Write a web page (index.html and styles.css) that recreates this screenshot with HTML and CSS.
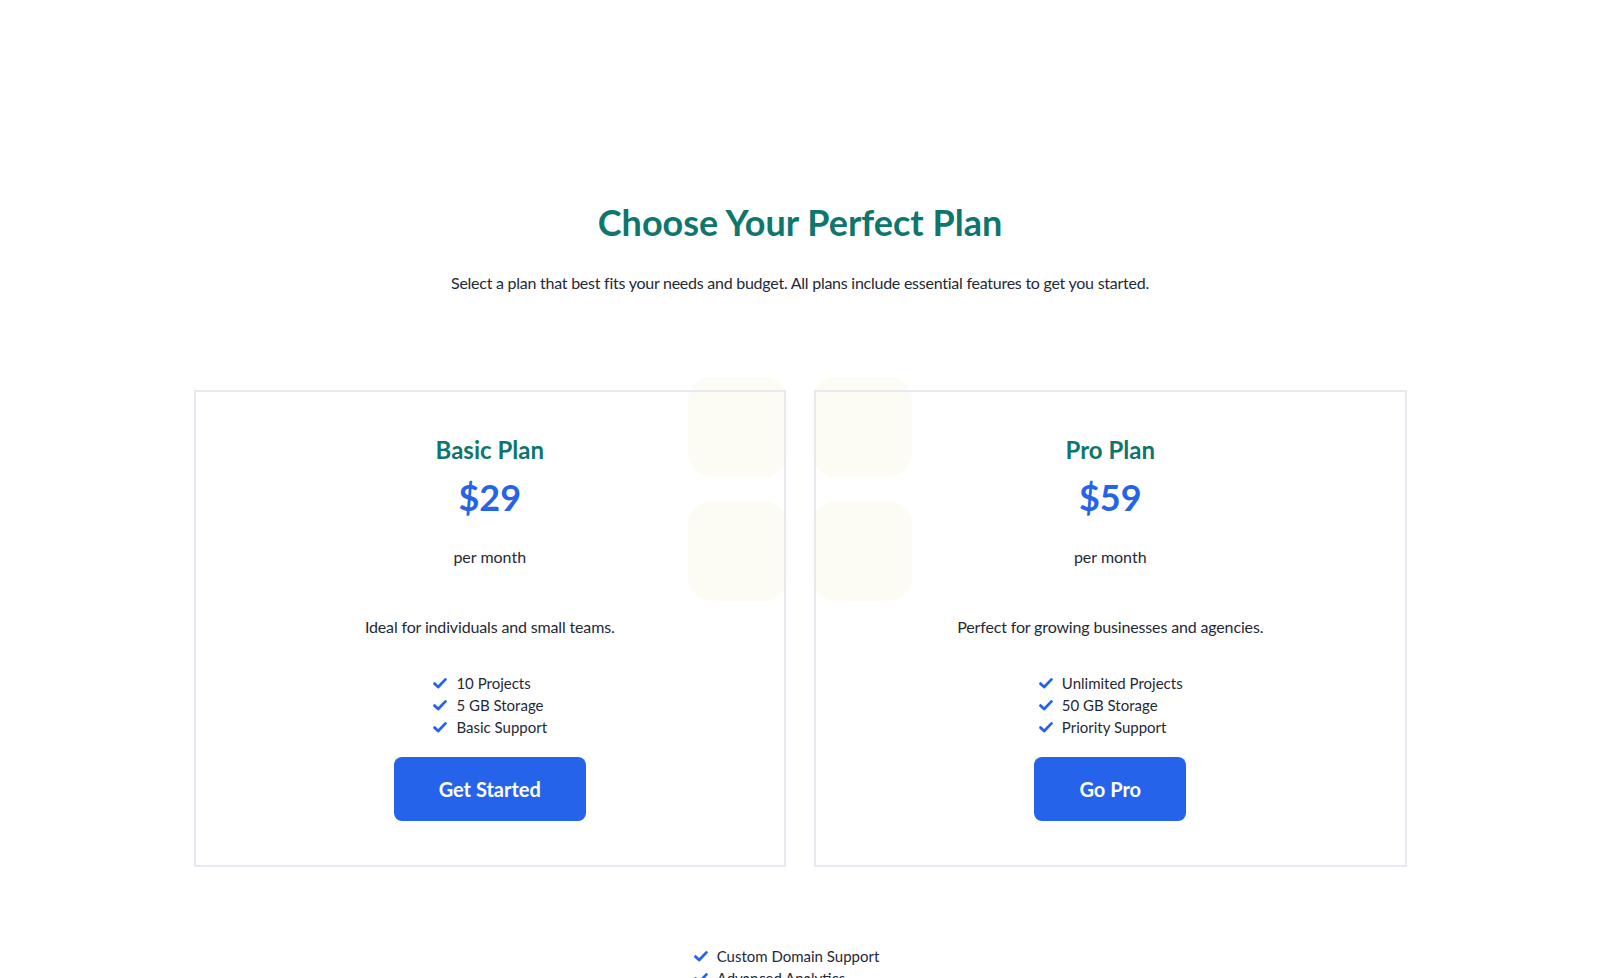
FILE: index.html
```html
<!DOCTYPE html>
<html lang="en">
<head>
<meta charset="utf-8">
<title>Choose Your Perfect Plan</title>
<link rel="stylesheet" href="styles.css">
</head>
<body>
<main class="pricing">
  <h1 class="pricing-title">Choose Your Perfect Plan</h1>
  <p class="pricing-subtitle">Select a plan that best fits your needs and budget. All plans include essential features to get you started.</p>

  <div class="plans">
    <div class="decor" aria-hidden="true">
      <span class="decor-tile"></span>
      <span class="decor-tile"></span>
      <span class="decor-tile"></span>
      <span class="decor-tile"></span>
    </div>

    <section class="plan">
      <h2 class="plan-name">Basic Plan</h2>
      <div class="plan-price">$29</div>
      <p class="plan-period">per month</p>
      <p class="plan-desc">Ideal for individuals and small teams.</p>
      <ul class="features">
        <li class="feature"><svg class="check" viewBox="0 0 16 16"><path d="M2.5 8.6 L6.2 12 L13.5 4.4"/></svg>10 Projects</li>
        <li class="feature"><svg class="check" viewBox="0 0 16 16"><path d="M2.5 8.6 L6.2 12 L13.5 4.4"/></svg>5 GB Storage</li>
        <li class="feature"><svg class="check" viewBox="0 0 16 16"><path d="M2.5 8.6 L6.2 12 L13.5 4.4"/></svg>Basic Support</li>
      </ul>
      <button class="plan-btn">Get Started</button>
    </section>

    <section class="plan">
      <h2 class="plan-name">Pro Plan</h2>
      <div class="plan-price">$59</div>
      <p class="plan-period">per month</p>
      <p class="plan-desc">Perfect for growing businesses and agencies.</p>
      <ul class="features">
        <li class="feature"><svg class="check" viewBox="0 0 16 16"><path d="M2.5 8.6 L6.2 12 L13.5 4.4"/></svg>Unlimited Projects</li>
        <li class="feature"><svg class="check" viewBox="0 0 16 16"><path d="M2.5 8.6 L6.2 12 L13.5 4.4"/></svg>50 GB Storage</li>
        <li class="feature"><svg class="check" viewBox="0 0 16 16"><path d="M2.5 8.6 L6.2 12 L13.5 4.4"/></svg>Priority Support</li>
      </ul>
      <button class="plan-btn">Go Pro</button>
    </section>
  </div>

  <ul class="features extra-features">
    <li class="feature"><svg class="check" viewBox="0 0 16 16"><path d="M2.5 8.6 L6.2 12 L13.5 4.4"/></svg>Custom Domain Support</li>
    <li class="feature"><svg class="check" viewBox="0 0 16 16"><path d="M2.5 8.6 L6.2 12 L13.5 4.4"/></svg>Advanced Analytics</li>
  </ul>
</main>
</body>
</html>
```

FILE: styles.css
```css
* { box-sizing: border-box; }

html, body {
  margin: 0;
  padding: 0;
  background: #ffffff;
}

body {
  font-family: "Lato", "Noto Sans", sans-serif;
  color: #1f2937;
}

.pricing {
  display: flex;
  flex-direction: column;
  align-items: center;
  padding-top: 200px;
  text-align: center;
}

.pricing-title {
  margin: 0;
  font-size: 36px;
  line-height: 44px;
  font-weight: 700;
  color: #0f766e;
}

.pricing-subtitle {
  margin: 27px 0 0;
  font-size: 16px;
  line-height: 24px;
  letter-spacing: -0.25px;
}

.plans {
  position: relative;
  margin-top: 95px;
  width: 1213px;
  display: grid;
  grid-template-columns: 1fr 1fr;
  gap: 28px;
}

.decor {
  position: absolute;
  top: -13px;
  left: 50%;
  transform: translateX(-50%);
  display: grid;
  grid-template-columns: 100px 100px;
  grid-auto-rows: 100px;
  gap: 24px;
  z-index: 0;
  pointer-events: none;
}

.decor-tile {
  background: #fcfbf4;
  border-radius: 24px;
}

.plan {
  position: relative;
  z-index: 1;
  border: 2px solid #e6eaf0;
  padding: 42px 40px 44px;
  display: flex;
  flex-direction: column;
  align-items: center;
}

.plan-name {
  margin: 0;
  font-size: 24px;
  line-height: 32px;
  font-weight: 700;
  color: #0f766e;
}

.plan-price {
  margin-top: 9px;
  font-size: 36px;
  line-height: 44px;
  font-weight: 700;
  color: #2563eb;
}

.plan-period {
  margin: 26px 0 0;
  font-size: 16px;
  line-height: 24px;
}

.plan-desc {
  margin: 46px 0 0;
  font-size: 16px;
  line-height: 24px;
  letter-spacing: -0.15px;
}

.features {
  list-style: none;
  margin: 33px 0 0;
  padding: 0;
  display: flex;
  flex-direction: column;
  align-items: flex-start;
}

.feature {
  display: flex;
  align-items: center;
  gap: 8px;
  font-size: 15px;
  line-height: 22px;
}

.check {
  width: 16px;
  height: 16px;
  fill: none;
  stroke: #2563eb;
  stroke-width: 2.8;
  stroke-linecap: round;
  stroke-linejoin: round;
}

.plan-btn {
  margin-top: 19px;
  height: 64px;
  padding: 0 45px;
  border: none;
  border-radius: 8px;
  background: #2563eb;
  color: #ffffff;
  font-family: inherit;
  font-size: 20px;
  font-weight: 700;
}

.extra-features {
  margin-top: 78px;
  padding-right: 28px;
}
```
